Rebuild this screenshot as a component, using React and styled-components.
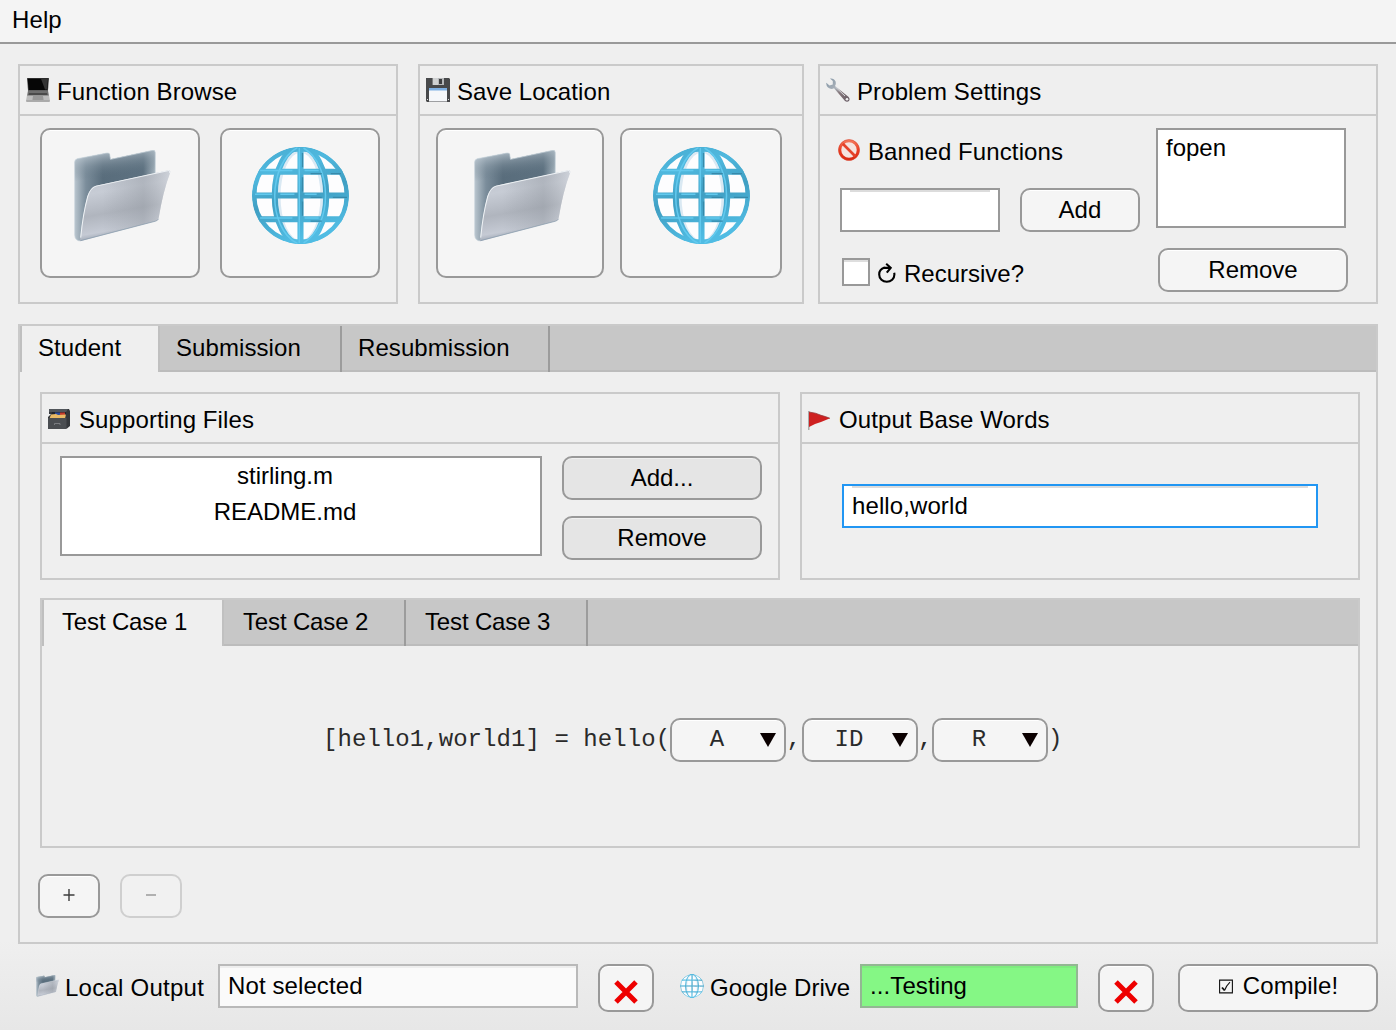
import React from "react";
import styled, { createGlobalStyle } from "styled-components";

const GlobalStyle = createGlobalStyle`
  * { box-sizing: border-box; }
  body { margin: 0; background: #efefef; }
  button, input { font: inherit; color: inherit; letter-spacing: inherit; margin: 0; }
`;

const Window = styled.div`
  width: 1396px;
  height: 1030px;
  display: flex;
  flex-direction: column;
  overflow: hidden;
  font-family: "Liberation Sans", Arial, Helvetica, sans-serif;
  font-size: 24px;
  letter-spacing: 0.1px;
  color: #000;
  background: linear-gradient(#efefef 0, #efefef 940px, #e7e7e7 1030px);
`;

const MenuBar = styled.header`
  height: 44px;
  flex: none;
  display: flex;
  align-items: center;
  padding: 0 12px 2px;
  border-bottom: 2px solid #999;
  background: #f4f4f4;
`;

const Main = styled.main`
  display: flex;
  flex-direction: column;
  gap: 20px;
  padding: 20px 18px 0;
`;

const TopRow = styled.div`
  display: grid;
  grid-template-columns: 380px 386px 560px;
  justify-content: start;
  column-gap: 20px;
  & > :last-child { margin-left: -6px; width: 560px; }
`;

const Panel = styled.section`
  height: ${(p) => p.$height}px;
  border: 2px solid #cacaca;
  display: flex;
  flex-direction: column;
`;

const PanelTitle = styled.h2`
  margin: 0;
  height: 50px;
  flex: none;
  display: flex;
  align-items: center;
  gap: ${(p) => p.$gap ?? 7}px;
  padding: 3px 0 0 6px;
  border-bottom: 2px solid #cacaca;
  font-size: inherit;
  font-weight: 400;
  white-space: nowrap;
  & > svg { margin-top: ${(p) => p.$iconShift ?? -3}px; }
`;

const Button = styled.button`
  width: ${(p) => p.$width}px;
  height: ${(p) => p.$height ?? 44}px;
  flex: none;
  display: flex;
  align-items: center;
  justify-content: center;
  gap: 10px;
  padding: ${(p) => p.$drop ?? 0}px 0 ${(p) => p.$lift ?? 0}px ${(p) => p.$nudge ?? 0}px;
  border: 2px solid #999;
  border-radius: 10px;
  background: ${(p) => (p.$dark ? "#e5e5e5" : "#f5f5f5")};
  box-shadow: inset 0 1px 0 ${(p) => (p.$dark ? "#f0f0f0" : "#fff")};
  &:disabled { border-color: #cfcfcf; background: #f1f1f1; box-shadow: none; }
`;

const BigButtons = styled.div`
  display: flex;
  gap: ${(p) => p.$gap}px;
  padding: 12px 0 0 ${(p) => p.$indent}px;
`;

const field = `
  border: 2px solid #999;
  border-radius: 0;
  outline: none;
`;

const TextField = styled.input`
  ${field}
  width: ${(p) => p.$width}px;
  height: 44px;
  flex: none;
  padding: 0 8px;
  border-color: ${(p) => p.$edge ?? "#999"};
  background: linear-gradient(#dcdcdc, #dcdcdc) center top / calc(100% - 16px) 2px no-repeat #fff;
`;

const Status = styled.div`
  width: ${(p) => p.$width}px;
  height: 44px;
  flex: none;
  padding-left: 8px;
  line-height: 40px;
  border: 2px solid ${(p) => p.$edge};
  background: ${(p) => p.$fill};
  box-shadow: inset 0 2px 0 ${(p) => p.$top};
`;

const ListBox = styled.ul`
  ${field}
  width: ${(p) => p.$width}px;
  height: 100px;
  flex: none;
  margin: 0;
  padding: 0 ${(p) => (p.$align === "center" ? 40 : 8)}px 0 8px;
  list-style: none;
  line-height: 36px;
  text-align: ${(p) => p.$align};
  letter-spacing: 0;
  background: #fff;
`;

const Settings = styled.div`
  display: flex;
  gap: 16px;
  padding: 12px 0 0 20px;
`;

const SettingsLeft = styled.div`
  width: 300px;
  display: flex;
  flex-direction: column;
`;

const SettingsRight = styled.div`
  display: flex;
  flex-direction: column;
  gap: 20px;
  & > button { margin-left: 2px; letter-spacing: 0; }
`;

const BannedLabel = styled.label`
  height: 60px;
  padding-bottom: 12px;
  display: flex;
  align-items: center;
  gap: 8px;
  margin-left: -2px;
  white-space: nowrap;
  & > svg { margin-top: -4px; }
`;

const AddRow = styled.div`
  display: flex;
  gap: 20px;
`;

const CheckRow = styled.label`
  display: flex;
  align-items: center;
  height: 28px;
  margin: 26px 0 0 2px;
  white-space: nowrap;
  letter-spacing: 0;
  & > svg { margin: 1px 8px 0 8px; }
  & > span { padding-top: 3px; }
`;

const Box = styled.div`
  width: 28px;
  height: 28px;
  border: 2px solid #999;
  background: linear-gradient(#dedede 0 2px, #fff 2px);
`;

const Tabs = styled.section`
  height: ${(p) => p.$height}px;
  flex: none;
  border: 2px solid #cacaca;
`;

const TabBar = styled.div`
  height: 46px;
  display: flex;
  letter-spacing: ${(p) => p.$spacing ?? 0.08}px;
  background: #c7c7c7;
  box-shadow: inset 0 -2px 0 #bcbcbc;
`;

const Tab = styled.div`
  width: ${(p) => p.$width}px;
  height: 46px;
  line-height: 44px;
  padding-left: ${(p) => p.$pad}px;
  border-right: ${(p) => (p.$active ? "0" : "2px solid #9c9c9c")};
  border-left: ${(p) => (p.$active ? "2px solid #bfbfbf" : "0")};
  background: ${(p) => (p.$active ? "#efefef" : "transparent")};
  box-shadow: ${(p) => (p.$active ? "2px 0 0 #c0c0c0" : "none")};
  white-space: nowrap;
`;

const StudentPane = styled.div`
  display: flex;
  flex-direction: column;
  padding: 20px 16px 0 20px;
`;

const PaneRow = styled.div`
  display: grid;
  grid-template-columns: 740px 560px;
  gap: 20px;
  margin-bottom: 18px;
`;

const Files = styled.div`
  display: flex;
  gap: 20px;
  padding: 12px 18px;
`;

const Stack = styled.div`
  display: flex;
  flex-direction: column;
  gap: 16px;
  letter-spacing: 0;
`;

const WordsBody = styled.div`
  padding: 40px 0 0 40px;
  display: flex;
`;

const Call = styled.div`
  display: flex;
  align-items: center;
  height: 44px;
  margin: 72px 0 0 281px;
  font-family: "Liberation Mono", "Courier New", monospace;
  letter-spacing: 0;
  color: #2a2a2a;
`;

const Code = styled.span`
  width: ${(p) => p.$width}px;
  flex: none;
  padding-bottom: 2px;
  letter-spacing: ${(p) => p.$spacing ?? 0}px;
  text-align: ${(p) => p.$align ?? "center"};
  white-space: pre;
`;

const Select = styled.button`
  width: 116px;
  height: 44px;
  flex: none;
  display: flex;
  align-items: center;
  padding: 0 8px 0 0;
  border: 2px solid #999;
  border-radius: 10px;
  background: #f5f5f5;
  box-shadow: inset 0 1px 0 #fff;
  & > span { flex: 1; text-align: center; padding: 0 2px 2px 4px; }
`;

const CaseButtons = styled.div`
  display: flex;
  gap: 20px;
  margin: 26px 0 0 -2px;
`;

const Footer = styled.footer`
  display: flex;
  align-items: flex-start;
  padding-left: 16px;
`;

const FooterLabel = styled.span`
  width: ${(p) => p.$width}px;
  height: 47px;
  flex: none;
  display: flex;
  align-items: center;
  gap: 6px;
  padding-left: ${(p) => p.$indent ?? 0}px;
  letter-spacing: ${(p) => p.$spacing}px;
  white-space: nowrap;
  & > svg { margin-top: ${(p) => p.$iconShift}px; }
`;

const Spacer = styled.div`
  width: ${(p) => p.$width}px;
  flex: none;
`;

const Folder = ({ size }) => (
  <svg width={size} height={size * 0.945} viewBox="0 0 290 274">
    <defs>
      <linearGradient id="fback" x1="0" x2="1" y1="0" y2="0">
        <stop offset="0" stopColor="#b9c5ce" />
        <stop offset="0.14" stopColor="#7b8d9b" />
        <stop offset="0.35" stopColor="#596d7c" />
        <stop offset="0.85" stopColor="#5d7180" />
        <stop offset="1" stopColor="#a5b3bd" />
      </linearGradient>
      <linearGradient id="fshine" x1="0" x2="0.12" y1="0" y2="1">
        <stop offset="0.02" stopColor="#d5dfe7" stopOpacity="0.9" />
        <stop offset="0.2" stopColor="#8c9ca8" stopOpacity="0.4" />
        <stop offset="0.34" stopColor="#607482" stopOpacity="0" />
      </linearGradient>
      <linearGradient id="ffront" x1="0.2" x2="0.42" y1="0" y2="1">
        <stop offset="0" stopColor="#bcc2cb" />
        <stop offset="0.3" stopColor="#c7ccd5" />
        <stop offset="0.6" stopColor="#b0b5be" />
        <stop offset="0.84" stopColor="#c5cad4" />
        <stop offset="0.93" stopColor="#9fa8b5" />
        <stop offset="1" stopColor="#d7dde4" />
      </linearGradient>
      <linearGradient id="fshade" x1="0" x2="1" y1="0" y2="0">
        <stop offset="0.25" stopColor="#8c929a" stopOpacity="0" />
        <stop offset="0.7" stopColor="#8c929a" stopOpacity="0.38" />
        <stop offset="1" stopColor="#d8dbe1" stopOpacity="0.5" />
      </linearGradient>
    </defs>
    <path d="M2 36Q2 28 10 26L99 9Q106 8 107 14L109 28L236 1Q243 0 243 8L243 90L60 190L20 272Q3 272 2 254Z" fill="url(#fback)" />
    <path d="M2 36Q2 28 10 26L99 9Q106 8 107 14L109 28L236 1Q243 0 243 8L243 90L60 190L20 272Q3 272 2 254Z" fill="url(#fshine)" stroke="#c9d5dd" strokeWidth="2" />
    <path d="M18 271Q26 190 40 140Q48 112 66 107L280 61Q290 59 287 69Q266 125 253 204Q251 211 243 213L20 272Z" fill="url(#ffront)" />
    <path d="M18 271Q26 190 40 140Q48 112 66 107L280 61Q290 59 287 69Q266 125 253 204Q251 211 243 213L20 272Z" fill="url(#fshade)" />
    <path d="M20 262Q27 190 41 139Q49 113 66 108L280 62Q288 60 286 69" fill="none" stroke="#eef2f5" strokeWidth="3" />
    <path d="M253 206Q250 211 243 213L20 271" fill="none" stroke="#8298aa" strokeWidth="2" />
  </svg>
);

const Globe = ({ size, small }) => {
  const w = small ? 4 : 6;
  return (
    <svg width={size} height={size} viewBox="0 0 96 96" fill="none">
      <defs>
        <linearGradient id="gl" x1="0" y1="0" x2="30" y2="96" gradientUnits="userSpaceOnUse">
          <stop offset="0" stopColor="#47abd0" />
          <stop offset="0.3" stopColor="#4fb8de" />
          <stop offset="0.6" stopColor="#409fc3" />
          <stop offset="1" stopColor="#50bce3" />
        </linearGradient>
        <clipPath id="gc"><circle cx="48" cy="48" r="48" /></clipPath>
      </defs>
      <circle cx="48" cy="48" r="46" fill="#fdfdfe" />
      <g clipPath="url(#gc)">
        <ellipse cx="48" cy="49" rx="21.5" ry="45" stroke="#dae9f3" strokeWidth="3.5" />
        <g stroke="url(#gl)" strokeWidth={w}>
          <circle cx="48" cy="48" r="45.9" strokeWidth={w - 1.4} />
          <ellipse cx="48" cy="48" rx="25.5" ry="48" />
          <path d="M48 0V96" />
          <path d="M6 24.5H90.01M1 48H95.01M6 71.5H90.01" />
        </g>
        <g stroke="#62c9ee" strokeWidth={w / 4}>
          <path d="M46.8 1V95M8 23.2H40M52 23.2H66M3 46.7H20M28 46.7H42M52 46.7H64M8 70.2H40M52 70.2H66" />
          <path d="M45 0.5C16 16 14 80 45 95.5M51 1C80 18 80 78 51 95" />
        </g>
        <path d="M58 26.4H69M78 26.4H88M58 49.9H69M80 49.9H94M58 73.4H69M50 6V20M50 30V44M50 54V68" stroke="#3689aa" strokeWidth={w / 4.5} />
      </g>
    </svg>
  );
};

const Laptop = () => (
  <svg width="24" height="24" viewBox="0 0 24 24">
    <path d="M1 0H23L22 13H2Z" fill="#555" />
    <path d="M1.6 0.5H22.4L21.4 12H2.6Z" fill="#060606" />
    <path d="M15 0.7H22L21 11.5H19Z" fill="#333" />
    <path d="M2 12.5H22L23 18H1Z" fill="#6e6e6e" />
    <path d="M3 15H21L21.5 17H2.5Z" fill="#4a4a4a" />
    <path d="M1 17.5H23L24 22.5Q24 24 22.5 24H1.5Q0 24 0 22.5Z" fill="#bcbcbc" />
    <path d="M7 18H17L17.6 22H6.4Z" fill="#989898" />
    <path d="M0.3 23H23.7" stroke="#999" />
  </svg>
);

const Floppy = () => (
  <svg width="24" height="24" viewBox="0 0 24 24">
    <path d="M0 0H23L24 1V24H1L0 23Z" fill="#48494b" />
    <path d="M6.5 0H18V7H6.5Z" fill="#b5b7b9" />
    <path d="M7 0H12V7H7Z" fill="#cfd1d2" />
    <path d="M13 1H16V6H13Z" fill="#3c3d3f" />
    <path d="M3 10H21V23.5H3Z" fill="#f5f7fa" />
    <path d="M3 10H21V12.5H3Z" fill="#7eb0e4" />
    <path d="M1 21.5H2M22 21.5H23" stroke="#ddd" />
  </svg>
);

const Wrench = () => (
  <svg width="24" height="24" viewBox="0 0 24 24">
    <defs>
      <linearGradient id="wr" x1="0" y1="0" x2="1" y2="1">
        <stop offset="0" stopColor="#8195a5" />
        <stop offset="0.4" stopColor="#aab1b9" />
        <stop offset="0.6" stopColor="#85767a" />
        <stop offset="1" stopColor="#655962" />
      </linearGradient>
    </defs>
    <path d="M4 0.5Q8 0 9.6 3.4Q10.3 6 9 8L22.4 18.8Q24.4 21 23 23Q21 24.5 19 23L8 10.3Q5 12 2 9.5Q0 7.5 0.3 4.8L3.5 7.6L6.8 6.4L6.8 3Z" fill="url(#wr)" />
    <path d="M9.5 9L19 18" stroke="#d6dade" strokeWidth="1" />
    <circle cx="21" cy="21.2" r="1.3" fill="#eee" />
  </svg>
);

const NoEntry = () => (
  <svg width="22" height="22" viewBox="0 0 23 23" fill="none">
    <defs>
      <linearGradient id="ne" x1="0" y1="0" x2="0" y2="1">
        <stop offset="0" stopColor="#f4775a" />
        <stop offset="0.5" stopColor="#ea3d22" />
        <stop offset="1" stopColor="#d92a12" />
      </linearGradient>
    </defs>
    <circle cx="11.5" cy="11.5" r="9.6" fill="#f5e4df" stroke="url(#ne)" strokeWidth="3" />
    <path d="M5 5L18 18" stroke="#e5432a" strokeWidth="2.8" />
    <circle cx="11.5" cy="11.5" r="10.9" stroke="#d8452f" strokeWidth="0.6" />
  </svg>
);

const FileBox = () => (
  <svg width="22" height="20" viewBox="0 0 22 20">
    <path d="M1 0H21L22 2V17L19 19.5L0 20V8L3 5H1Z" fill="#34373b" />
    <path d="M1 0H20L18 3H1Z" fill="#51555a" />
    <path d="M4 3H18V7H3Z" fill="#20232c" />
    <path d="M7 3.5H12V6H7Z" fill="#2d4c9c" />
    <path d="M12 3.5H17V6H12Z" fill="#c33b2c" />
    <path d="M3 5.5L8 5L10 6L18 5.5L17 9.5H1.5Z" fill="#e9b965" />
    <path d="M0 9H18.5V20H0Z" fill="#4a4d51" />
    <path d="M6.5 16V14.5H12V16" fill="none" stroke="#85888c" strokeWidth="0.8" />
  </svg>
);

const Flag = () => (
  <svg width="22" height="19" viewBox="0 0 22 19">
    <path d="M0.8 0V19" stroke="#9a9a9a" strokeWidth="1.2" />
    <path d="M1 1Q8 1.8 13 4.3Q17 5.3 22 7.3Q17 9.5 13 11Q7 12.5 1 16Z" fill="#ce2020" />
    <path d="M1 1Q8 1.8 13 4.3Q17 5.3 22 7.3" fill="none" stroke="#96393a" strokeWidth="0.8" />
  </svg>
);

const Cycle = () => (
  <svg width="18" height="20" viewBox="0 0 18 20" fill="none" stroke="#000" strokeWidth="2.1">
    <path d="M6.6 4.6C3.2 5.6 1.2 8.2 1.2 11.5C1.2 15.7 4.6 18.8 8.8 18.8C13 18.8 16.4 15.7 16.4 11.5Q16.4 10.6 16.2 9.8" />
    <path d="M5.8 4.9L12.4 4.8M8.2 0.8L12.7 4.8L8.8 9.6" />
  </svg>
);

const Cross = () => (
  <svg width="24" height="24" viewBox="0 0 24 24">
    <path d="M2 2L22 22M22 2L2 22" stroke="#ee0000" strokeWidth="5" />
  </svg>
);

const Tick = () => (
  <svg width="14" height="15" viewBox="0 0 14 15" fill="none" stroke="#111">
    <path d="M0.6 1.1H13.4V13.9H0.6Z" strokeWidth="1.1" />
    <path d="M3 8.5L5.6 11.3" strokeWidth="1.8" />
    <path d="M5.5 11.5Q7.5 6.5 11 3.2" strokeWidth="1.1" />
  </svg>
);

const Arrow = () => (
  <svg width="16" height="14" viewBox="0 0 16 14">
    <path d="M0 0H16L8 14Z" fill="#0a0000" />
  </svg>
);

const Plus = () => (
  <svg width="12" height="12" viewBox="0 0 12 12" stroke="#3c3c3c" strokeWidth="1.4">
    <path d="M0.5 6H11.5M6 0V12" />
  </svg>
);

const Minus = () => (
  <svg width="12" height="12" viewBox="0 0 12 12" stroke="#a0a0a0" strokeWidth="1.6">
    <path d="M1 6H11" />
  </svg>
);

const args = [
  { value: "A", after: ",", gap: 16 },
  { value: "ID", after: ",", gap: 14 },
  { value: "R", after: ")", gap: 12 },
];

export default function App() {
  return (
    <Window>
      <GlobalStyle />
      <MenuBar>Help</MenuBar>
      <Main>
        <TopRow>
          <Panel $height={240}>
            <PanelTitle><Laptop />Function Browse</PanelTitle>
            <BigButtons $indent={20} $gap={20}>
              <Button $width={160} $height={150} $lift={14} $nudge={4}><Folder size={97} /></Button>
              <Button $width={160} $height={150} $lift={16}><Globe size={97} /></Button>
            </BigButtons>
          </Panel>
          <Panel $height={240}>
            <PanelTitle><Floppy />Save Location</PanelTitle>
            <BigButtons $indent={16} $gap={16}>
              <Button $width={168} $height={150} $lift={14} $nudge={4}><Folder size={97} /></Button>
              <Button $width={162} $height={150} $lift={16}><Globe size={97} /></Button>
            </BigButtons>
          </Panel>
          <Panel $height={240}>
            <PanelTitle><Wrench />Problem Settings</PanelTitle>
            <Settings>
              <SettingsLeft>
                <BannedLabel><NoEntry />Banned Functions</BannedLabel>
                <AddRow>
                  <TextField $width={160} defaultValue="" />
                  <Button $width={120}>Add</Button>
                </AddRow>
                <CheckRow><Box /><Cycle /><span>Recursive?</span></CheckRow>
              </SettingsLeft>
              <SettingsRight>
                <ListBox $width={190} $align="left"><li>fopen</li></ListBox>
                <Button $width={190}>Remove</Button>
              </SettingsRight>
            </Settings>
          </Panel>
        </TopRow>

        <Tabs $height={620}>
          <TabBar>
            <Tab $active $width={138} $pad={16}>Student</Tab>
            <Tab $width={184} $pad={18}>Submission</Tab>
            <Tab $width={208} $pad={16}>Resubmission</Tab>
          </TabBar>
          <StudentPane>
            <PaneRow>
              <Panel $height={188}>
                <PanelTitle $gap={9} $iconShift={-2}><FileBox />Supporting Files</PanelTitle>
                <Files>
                  <ListBox $width={482} $align="center">
                    <li>stirling.m</li>
                    <li>README.md</li>
                  </ListBox>
                  <Stack>
                    <Button $dark $width={200}>Add...</Button>
                    <Button $dark $width={200}>Remove</Button>
                  </Stack>
                </Files>
              </Panel>
              <Panel $height={188}>
                <PanelTitle $gap={9} $iconShift={1}><Flag />Output Base Words</PanelTitle>
                <WordsBody>
                  <TextField $width={476} $edge="#2196f3" defaultValue="hello,world" />
                </WordsBody>
              </Panel>
            </PaneRow>
            <Tabs $height={250}>
              <TabBar $spacing={-0.15}>
                <Tab $active $width={180} $pad={18}>Test Case 1</Tab>
                <Tab $width={184} $pad={21}>Test Case 2</Tab>
                <Tab $width={182} $pad={19}>Test Case 3</Tab>
              </TabBar>
              <Call>
                <Code $width={347} $spacing={0.06} $align="left">[hello1,world1] = hello(</Code>
                {args.map((a) => (
                  <React.Fragment key={a.value}>
                    <Select><span>{a.value}</span><Arrow /></Select>
                    <Code $width={a.gap}>{a.after}</Code>
                  </React.Fragment>
                ))}
              </Call>
            </Tabs>
            <CaseButtons>
              <Button $width={62} $lift={2}><Plus /></Button>
              <Button $width={62} $lift={2} disabled><Minus /></Button>
            </CaseButtons>
          </StudentPane>
        </Tabs>

        <Footer>
          <FooterLabel $width={184} $indent={2} $spacing={0.25} $iconShift={-3}><Folder size={23} />Local Output</FooterLabel>
          <Status $width={360} $edge="#b9b9b9" $fill="#fafafa" $top="#eeeeee">Not selected</Status>
          <Spacer $width={20} />
          <Button $width={56} $height={48} $drop={8}><Cross /></Button>
          <Spacer $width={26} />
          <FooterLabel $width={180} $spacing={0} $iconShift={-4}><Globe size={24} small />Google Drive</FooterLabel>
          <Status $width={218} $edge="#93b793" $fill="#85f785" $top="#7eed7e">...Testing</Status>
          <Spacer $width={20} />
          <Button $width={56} $height={48} $drop={8}><Cross /></Button>
          <Spacer $width={24} />
          <Button $width={200} $height={48} $lift={4} $nudge={1}><Tick />Compile!</Button>
        </Footer>
      </Main>
    </Window>
  );
}
